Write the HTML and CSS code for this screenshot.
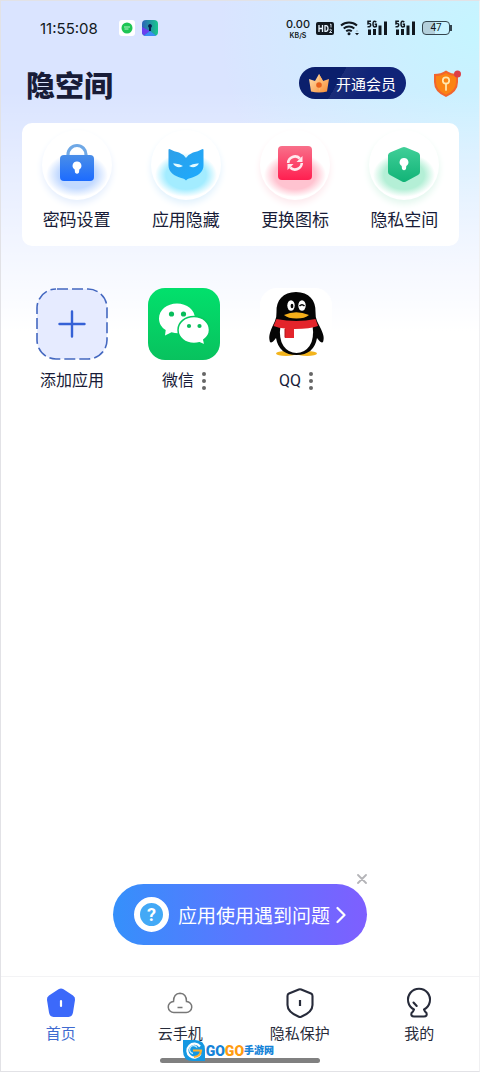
FILE: index.html
```
<!DOCTYPE html>
<html lang="zh-CN">
<head>
    <meta charset="UTF-8">
    <meta name="viewport" content="width=device-width, initial-scale=1.0">
    <title>隐空间</title>
    <link rel="stylesheet" href="styles.css">
</head>
<body>
    <div class="page">
        <div class="status-bar">
            <span class="clock">11:55:08</span>
            <svg class="status-app" width="16" height="16" viewBox="0 0 16 16">
                <rect width="16" height="16" rx="3" fill="#fff"/>
                <circle cx="8" cy="8" r="5.500" fill="#1ec554"/>
                <path d="M5 7h6M5.500 9h4" stroke="#b6f5c8" stroke-width="1"/>
            </svg>
            <svg class="status-app" width="16" height="16" viewBox="0 0 16 16">
                <defs>
                    <linearGradient id="spaceFill" x1="0" y1="0" x2="1" y2="0">
                        <stop offset="0" stop-color="#2c62b8"/>
                        <stop offset="1" stop-color="#18c88c"/>
                    </linearGradient>
                </defs>
                <rect width="16" height="16" rx="4" fill="url(#spaceFill)"/>
                <path d="M0 7v5a4 4 0 0 0 2 3.500L8 11z" fill="#6a3ff0"/>
                <path d="M2 15.500 8 11l6 4.500A4 4 0 0 1 12 16H4a4 4 0 0 1-2-.5z" fill="#3c8cf4"/>
                <path d="M8 4a2 2 0 0 0-1 3.700V11h2V7.700A2 2 0 0 0 8 4z" fill="#08204f"/>
            </svg>
            <div class="status-right">
                <div class="speed"><b>0.00</b><span>KB/S</span></div>
                <svg width="18" height="13" viewBox="0 0 18 13">
                    <rect width="18" height="13" rx="2" fill="#111820"/>
                    <path d="M3 3v7M6.500 3v7M3 6.500h3.500M9 3.700v5.600h1q2 0 2-2.800t-2-2.800z" fill="none" stroke="#e8f4ff" stroke-width="1.300"/>
                    <path d="M14 2.500l1-.5v3.500M13.500 7.800q1.500-1 2 0 0 1-2 2.700h2.500" fill="none" stroke="#e8f4ff" stroke-width=".9"/>
                </svg>
                <svg width="20" height="16" viewBox="0 0 20 16">
                    <g fill="none" stroke="#111820" stroke-width="2">
                        <path d="M1 5.500a12 12 0 0 1 16 0"/>
                        <path d="M3.700 8.500a8 8 0 0 1 10.600 0"/>
                        <path d="M6.200 11.300a4.500 4.500 0 0 1 5.600 0"/>
                    </g>
                    <circle cx="9" cy="13.700" r="1.500" fill="#111820"/>
                    <path d="M15 13h4l-2 2.300z" fill="#111820"/>
                    <path d="M15.500 11.500 17 10l1.500 1.500z" fill="#9db4bd"/>
                </svg>
                <svg width="22" height="16" viewBox="0 0 22 16">
                    <path d="M5 1.200H2v2.500q2.700-.8 2.700 1.300T1.500 6.800M10.300 2Q7 0 7 4t3.300 2.500V4.300H8.700" fill="none" stroke="#111820" stroke-width="1.500"/>
                    <path d="M2 9.500h3V15H2zM7 9h3v6H7zM12.500 5.500h3V15h-3zM18 1.500h3V15h-3z" fill="#111820"/>
                </svg>
                <svg width="22" height="16" viewBox="0 0 22 16">
                    <path d="M5 1.200H2v2.500q2.700-.8 2.700 1.300T1.500 6.800M10.300 2Q7 0 7 4t3.300 2.500V4.300H8.700" fill="none" stroke="#111820" stroke-width="1.500"/>
                    <path d="M2 9.500h3V15H2zM7 9h3v6H7zM12.500 5.500h3V15h-3zM18 1.500h3V15h-3z" fill="#111820"/>
                </svg>
                <div class="battery">47</div>
            </div>
        </div>

        <header class="header">
            <h1>隐空间</h1>
            <button class="vip" type="button">
                <svg width="20" height="19" viewBox="0 0 20 19">
                    <defs>
                        <linearGradient id="crownFill" x1="0" y1="0" x2="1" y2="1">
                            <stop offset="0" stop-color="#ffe2b4"/>
                            <stop offset="1" stop-color="#f98d33"/>
                        </linearGradient>
                    </defs>
                    <path d="M10 0 14 7 20 5 18 17.500Q10 19.500 2 17.500L0 5 6 7z" fill="url(#crownFill)"/>
                    <path d="M10 0 14 7 10 18z" fill="#ffb86e"/>
                    <circle cx="10" cy="11" r="2.800" fill="#e8601c"/>
                </svg>
                开通会员
            </button>
            <button class="guard" type="button" aria-label="安全">
                <svg width="28" height="28" viewBox="0 0 28 28">
                    <path d="M13 1.500Q18 5 25 5v8q0 10-12 15Q1 23 1 13V5q7 0 12-3.500z" fill="#f2652d"/>
                    <path d="M13 4Q17 7 23 7v6q0 8.500-10 12.700Q3 21.500 3 13V7q6 0 10-3z" fill="#fb8413"/>
                    <circle cx="13" cy="11.500" r="3.200" fill="none" stroke="#ffe9b0" stroke-width="1.700"/>
                    <path d="M13 14.500V21" stroke="#ffe9b0" stroke-width="1.700" stroke-linecap="round"/>
                    <circle cx="24.500" cy="5" r="3.500" fill="#dc4048"/>
                </svg>
            </button>
        </header>

        <main class="main">
            <section class="tools">
                <button class="tool" type="button">
                    <span class="disc blue">
                        <svg width="70" height="70" viewBox="0 0 70 70">
                            <defs>
                                <linearGradient id="lockFill" x1="0" y1="0" x2="0" y2="1">
                                    <stop offset="0" stop-color="#4a8ee8"/>
                                    <stop offset="1" stop-color="#1c6bff"/>
                                </linearGradient>
                            </defs>
                            <path d="M26 27v-2.500a9 9 0 0 1 18 0V27" fill="none" stroke="#6fa8e6" stroke-width="3.200"/>
                            <rect x="18" y="25" width="34" height="26" rx="4" fill="url(#lockFill)"/>
                            <path d="M35 31.500a4.300 4.300 0 0 0-2.300 8l.3 3q2 2.500 4 0l.3-3a4.300 4.300 0 0 0-2.300-8z" fill="#fff"/>
                        </svg>
                    </span>
                    密码设置
                </button>
                <button class="tool" type="button">
                    <span class="disc cyan">
                        <svg width="70" height="70" viewBox="0 0 70 70">
                            <defs>
                                <linearGradient id="maskFill" x1="0" y1="0" x2="1" y2="1">
                                    <stop offset="0" stop-color="#2e9fe8"/>
                                    <stop offset="1" stop-color="#1cabff"/>
                                </linearGradient>
                            </defs>
                            <path d="M17.500 20q0-1.500 1.500-.7Q23 21.500 28 22.500q4 1.500 7 5.500 3-4 7-5.500 5-1 9-3.200 1.500-.8 1.500.7V35c0 6-4 10-10.500 12.300-3 1-5.500 1.200-7 3.200-1.500-2-4-2.200-7-3.200C21.500 45 17.500 41 17.500 35z" fill="url(#maskFill)"/>
                            <path d="M22 33.500q6-.5 10 2.500-6 3.500-10-2.500zM48 33.500q-6-.5-10 2.500 6 3.500 10-2.500z" fill="#e4faff"/>
                        </svg>
                    </span>
                    应用隐藏
                </button>
                <button class="tool" type="button">
                    <span class="disc red">
                        <svg width="70" height="70" viewBox="0 0 70 70">
                            <defs>
                                <linearGradient id="swapFill" x1="0" y1="0" x2="0" y2="1">
                                    <stop offset="0" stop-color="#f8708a"/>
                                    <stop offset="1" stop-color="#ff1f50"/>
                                </linearGradient>
                            </defs>
                            <rect x="18" y="16" width="34" height="34" rx="4" fill="url(#swapFill)"/>
                            <path d="M28.200 33a6.800 6.800 0 0 1 11.600-4.500M41.800 33a6.800 6.800 0 0 1-11.600 4.500" fill="none" stroke="#ffe9ee" stroke-width="2.600"/>
                            <path d="M42.500 26v6h-6zM27.500 40v-6h6z" fill="#ffe9ee"/>
                        </svg>
                    </span>
                    更换图标
                </button>
                <button class="tool" type="button">
                    <span class="disc green">
                        <svg width="70" height="70" viewBox="0 0 70 70">
                            <defs>
                                <linearGradient id="hexFill" x1="0" y1="0" x2="0" y2="1">
                                    <stop offset="0" stop-color="#40cf98"/>
                                    <stop offset="1" stop-color="#12b377"/>
                                </linearGradient>
                            </defs>
                            <path d="M33 17.500q2-1 4 0l12 5q2 1 2 3V42q0 2-2 3l-12 6.500q-2 1-4 0L21 45q-2-1-2-3V25.500q0-2 2-3z" fill="url(#hexFill)"/>
                            <path d="M35 28a4.300 4.300 0 0 0-2.300 8l.3 3q2 2.500 4 0l.3-3a4.300 4.300 0 0 0-2.300-8z" fill="#fff"/>
                        </svg>
                    </span>
                    隐私空间
                </button>
            </section>

            <section class="apps">
                <div class="app">
                    <button class="app-icon" type="button" aria-labelledby="add-label">
                        <svg width="72" height="72" viewBox="0 0 72 72">
                            <rect x="1" y="1" width="70" height="70" rx="19" fill="#e6ebff" stroke="#4468c0" stroke-width="1.600" stroke-dasharray="11 4" stroke-dashoffset="-1"/>
                            <path d="M36 23.500v25M23.500 36h25" stroke="#3561d6" stroke-width="2.400" stroke-linecap="round"/>
                        </svg>
                    </button>
                    <div class="app-name" id="add-label">添加应用</div>
                </div>
                <div class="app">
                    <button class="app-icon" type="button" aria-labelledby="wechat-label">
                        <svg width="72" height="72" viewBox="0 0 72 72">
                            <defs>
                                <linearGradient id="wechatFill" x1="0" y1="0" x2="0" y2="1">
                                    <stop offset="0" stop-color="#02e06c"/>
                                    <stop offset="1" stop-color="#08c25e"/>
                                </linearGradient>
                            </defs>
                            <rect width="72" height="72" rx="17" fill="url(#wechatFill)"/>
                            <path d="M29 15.500c-10 0-18 6.500-18 15 0 5 2.600 9 6.700 11.600L17 47.500l6.500-3.300q8 2.300 14-.6 9-4 9.500-13c0-8.600-8-15.100-18-15.100z" fill="#fff"/>
                            <path d="M46 28.500c-9 0-16 6-16 13.500s7 13.500 16 13.500q3 0 5.500-.8L57 57.200l-1.200-5.300q5.700-4 5.700-9.900c0-7.500-6.500-13.500-15.500-13.500z" fill="#fff" stroke="#06c960" stroke-width="1.500"/>
                            <g fill="#08bd5b">
                                <circle cx="23.500" cy="26" r="2.600"/>
                                <circle cx="35.500" cy="26" r="2.600"/>
                                <circle cx="41" cy="38" r="2.100"/>
                                <circle cx="51.500" cy="38" r="2.100"/>
                            </g>
                        </svg>
                    </button>
                    <div class="app-name">
                        <span id="wechat-label">微信</span>
                        <button class="more" type="button" aria-label="更多"><i></i><i></i><i></i></button>
                    </div>
                </div>
                <div class="app">
                    <button class="app-icon" type="button" aria-labelledby="qq-label">
                        <svg width="72" height="72" viewBox="0 0 72 72">
                            <rect width="72" height="72" rx="17" fill="#fff"/>
                            <ellipse cx="26" cy="65.500" rx="10" ry="2.600" fill="#f3b41c"/>
                            <ellipse cx="47" cy="65.500" rx="10" ry="2.600" fill="#f3b41c"/>
                            <path d="M36 4C23 4 16 12.500 16.500 24q.2 5-1.500 9C11 41 8.500 47 9.500 52q.5 6 6.500-2 3 17 20.500 17T57 50q6 8 6.500 2C64.500 47 61 41 57 33q-1.700-4-1.500-9C56 12.500 49 4 36 4z" fill="#050505"/>
                            <path d="M20.500 37q-2 14 3 21 5 7 13 7t13-7q5-7 3-21z" fill="#fff"/>
                            <path d="M16.500 31q20 4 39 0l2.500 7q-8 3-23 3h-1v9h-9v-9.500q-6-.5-11.500-2.500z" fill="#e3242b"/>
                            <path d="M25 41v8.500" stroke="#ad171c" stroke-width="1"/>
                            <ellipse cx="31" cy="17.500" rx="3.700" ry="5.200" fill="#fff"/>
                            <ellipse cx="42" cy="17.500" rx="3.700" ry="5.200" fill="#fff"/>
                            <ellipse cx="32" cy="18" rx="1.400" ry="2.200" fill="#050505"/>
                            <path d="M39.500 18q2.500-2.500 5 0" fill="none" stroke="#050505" stroke-width="1.500"/>
                            <path d="M24 27Q36 21.500 49 27 45 30.500 36.500 30.500T24 27z" fill="#f5b01a"/>
                        </svg>
                    </button>
                    <div class="app-name">
                        <span id="qq-label">QQ</span>
                        <button class="more" type="button" aria-label="更多"><i></i><i></i><i></i></button>
                    </div>
                </div>
            </section>
        </main>

        <div class="help">
            <button class="help-close" type="button" aria-label="关闭">
                <svg width="10" height="10" viewBox="0 0 10 10">
                    <path d="M1 1l8 8M9 1 1 9" stroke="#b4b4b8" stroke-width="1.800" stroke-linecap="round"/>
                </svg>
            </button>
            <button class="help-btn" type="button">
                <span class="help-mark">?</span>
                <span class="help-text">应用使用遇到问题</span>
                <svg width="10" height="18" viewBox="0 0 10 18">
                    <path d="M1.500 2 8.500 9 1.500 16" fill="none" stroke="#fff" stroke-width="2.200" stroke-linecap="round" stroke-linejoin="round"/>
                </svg>
            </button>
        </div>

        <nav class="tabs">
            <a class="tab active" href="#home">
                <svg width="32" height="32" viewBox="0 0 32 32">
                    <path d="M13.500 2.300q2.500-1.600 5 0L28 8.500q2.500 1.700 2 4.500l-2 12.500q-.6 4-4.500 4.500h-15q-3.900-.5-4.500-4.500L2 13q-.5-2.800 2-4.500z" fill="#3c69fa"/>
                    <path d="M16 14v5" stroke="#fff" stroke-width="2.200" stroke-linecap="round"/>
                </svg>
                首页
            </a>
            <a class="tab" href="#cloud">
                <svg width="32" height="32" viewBox="0 0 32 32">
                    <path d="M10 25.500a5.500 5.500 0 0 1-.5-11Q9.500 6.500 16 6.200q6.500.3 6.500 8.300a5.500 5.500 0 0 1-.5 11z" fill="none" stroke="#777" stroke-width="1.500"/>
                    <path d="M13.500 20.500h5" stroke="#777" stroke-width="1.500"/>
                </svg>
                云手机
            </a>
            <a class="tab" href="#privacy">
                <svg width="32" height="32" viewBox="0 0 32 32">
                    <path d="M14.800 2.500q1.200-.5 2.400 0l9.800 4q1.500.7 1.500 2.500v9c0 6-4.500 9-11.300 11.700q-1.200.5-2.400 0C8 27 3.500 24 3.500 18V9q0-1.800 1.500-2.500z" fill="none" stroke="#272b3a" stroke-width="2.100"/>
                    <path d="M16 13v6" stroke="#272b3a" stroke-width="2.200"/>
                </svg>
                隐私保护
            </a>
            <a class="tab" href="#mine">
                <svg width="32" height="32" viewBox="0 0 32 32">
                    <path d="M11 22.500a11 11 0 1 1 10 0q.5 1.800 2.500 3.500 1 3.500-2.500 3.500H11Q7.500 29.500 8.500 26q2-1.700 2.500-3.500z" fill="none" stroke="#272b3a" stroke-width="2.100" stroke-linejoin="round"/>
                    <path d="M10.500 15.500l3.200 3.500" stroke="#272b3a" stroke-width="2.100" stroke-linecap="round"/>
                </svg>
                我的
            </a>
            <div class="home-bar"></div>
            <div class="watermark">
                <svg width="22" height="21" viewBox="0 0 22 21">
                    <path d="M0 0h12q10 0 10 10v11H10Q0 21 0 11z" fill="#1598e2"/>
                    <path d="M17 6.500A7 7 0 1 0 17.500 14" fill="none" stroke="#fff" stroke-width="2.200"/>
                    <path d="M10 10.500h8q-.5 6-7 6.500" fill="none" stroke="#ffb02e" stroke-width="2.200"/>
                    <path d="M14 7.500a4 4 0 1 0-4 6" fill="none" stroke="#c9efff" stroke-width="1.300"/>
                </svg>
                <span class="mark-blue">GO</span><span class="mark-orange">GO</span><span class="mark-cn">手游网</span>
            </div>
        </nav>
    </div>
</body>
</html>
```

FILE: styles.css
```
* {
    box-sizing: border-box;
}
body {
    margin: 0;
    font-family: Roboto, "Noto Sans CJK SC", sans-serif;
    color: #181c38;
    background: #fff;
}
h1 {
    margin: 0;
}
button {
    padding: 0;
    border: none;
    background: none;
    font-family: inherit;
    color: inherit;
    cursor: pointer;
}
svg {
    display: block;
    flex: none;
}
.page {
    display: flex;
    flex-direction: column;
    min-height: 100vh;
    border: 1px solid #e2e2e6;
    border-right-color: #f0f0f2;
    background:
        linear-gradient(to bottom, rgba(255, 255, 255, 0) 90px, rgba(255, 255, 255, 0.6) 230px, #fff 330px),
        radial-gradient(ellipse 260px 240px at 100% 30px, #c5f5ff, rgba(197, 245, 255, 0)),
        #dae4ff;
}

/* status bar */
.status-bar {
    display: flex;
    align-items: center;
    height: 54px;
    padding: 0 29px 0 39px;
    color: #111820;
}
.clock {
    margin-right: 21px;
    font-family: Inter, sans-serif;
    font-size: 15px;
}
.status-app {
    margin-right: 7px;
}
.status-right {
    display: flex;
    align-items: center;
    gap: 6px;
    margin-left: auto;
}
.speed {
    display: flex;
    flex-direction: column;
    align-items: center;
    font-family: Inter, sans-serif;
    font-size: 7px;
    font-weight: 600;
    line-height: 9px;
}
.speed b {
    font-size: 11px;
    font-weight: 500;
    line-height: 14px;
}
.battery {
    position: relative;
    width: 28px;
    height: 14px;
    border: 1px solid #34454e;
    border-radius: 4px;
    background: linear-gradient(to right, #b4d0dc 47%, transparent 47%);
    font-size: 10px;
    line-height: 12px;
    text-align: center;
}
.battery::after {
    content: "";
    position: absolute;
    top: 3px;
    right: -3px;
    width: 2px;
    height: 6px;
    background: #34454e;
}

/* title row */
.header {
    display: flex;
    align-items: center;
    height: 56px;
    padding: 0 18px 0 25px;
}
.header h1 {
    margin-right: auto;
    padding-top: 8px;
    font-size: 29px;
    font-weight: 900;
    line-height: 40px;
}
.vip {
    display: flex;
    align-items: center;
    gap: 7px;
    height: 32px;
    padding: 0 10px;
    border-radius: 16px;
    background: linear-gradient(120deg, #0b1f6c 38%, #1b2d78 38%, #102478 60%);
    color: #fff;
    font-size: 15px;
}
.guard {
    margin-left: 27px;
}

/* tool card */
.main {
    flex: 1;
    padding: 12px 20px 0 21px;
}
.tools {
    display: grid;
    grid-template-columns: repeat(4, 1fr);
    padding: 7px 0 14px;
    border-radius: 10px;
    background: #fff;
}
.tool {
    display: flex;
    flex-direction: column;
    align-items: center;
    gap: 8px;
    font-size: 17px;
    line-height: 24px;
}
.disc {
    width: 70px;
    height: 70px;
    border-radius: 50%;
}
.blue {
    background: radial-gradient(ellipse 31px 22px at 50% 45px, #c3daff 60%, rgba(195, 218, 255, 0));
    box-shadow: 0 4px 7px #e6effd;
}
.cyan {
    background: radial-gradient(ellipse 31px 22px at 50% 45px, #a3ecff 65%, rgba(163, 236, 255, 0));
    box-shadow: 0 4px 7px #e2f2fd;
}
.red {
    background: radial-gradient(ellipse 31px 22px at 50% 45px, #ffc3d0 65%, rgba(255, 195, 208, 0));
    box-shadow: 0 4px 7px #fdeaee;
}
.green {
    background: radial-gradient(ellipse 31px 22px at 50% 45px, #b4efd6 65%, rgba(180, 239, 214, 0));
    box-shadow: 0 4px 7px #e3f7ee;
}

/* app grid */
.apps {
    display: grid;
    grid-template-columns: repeat(auto-fill, 112px);
    margin: 42px -6px 0;
}
.app {
    display: flex;
    flex-direction: column;
    align-items: center;
    gap: 9px;
}
.app-name {
    display: flex;
    align-items: center;
    gap: 8px;
    font-size: 16px;
    line-height: 24px;
}
.more {
    display: flex;
    flex-direction: column;
    gap: 3px;
}
.more i {
    width: 4px;
    height: 4px;
    border-radius: 50%;
    background: #666;
}

/* help bubble */
.help {
    position: relative;
    align-self: center;
    margin-bottom: 31px;
}
.help-btn {
    display: flex;
    align-items: center;
    height: 61px;
    padding: 0 21px;
    border-radius: 31px;
    background: linear-gradient(to right, #3590fb, #5b76ff 50%, #7e5fff);
    color: #fff;
}
.help-mark {
    width: 35px;
    height: 35px;
    border: 6px solid #fff;
    border-radius: 50%;
    background: #43a9f6;
    font-size: 18px;
    font-weight: 700;
    line-height: 23px;
}
.help-text {
    margin: 0 6px 0 9px;
    font-size: 19px;
}
.help-close {
    position: absolute;
    top: -10px;
    right: 0;
}

/* bottom tabs */
.tabs {
    position: relative;
    display: grid;
    grid-template-columns: repeat(4, 1fr);
    height: 95px;
    padding-top: 10px;
    border-top: 1px solid #f3f3f5;
    background: #fff;
}
.tab {
    display: flex;
    flex-direction: column;
    align-items: center;
    gap: 5px;
    color: #272b3a;
    font-size: 15px;
    line-height: 20px;
    text-decoration: none;
}
.active {
    color: #3f6bd0;
}
.home-bar {
    position: absolute;
    bottom: 8px;
    left: 50%;
    width: 160px;
    height: 5px;
    margin-left: -80px;
    border-radius: 3px;
    background: #808080;
}
.watermark {
    position: absolute;
    bottom: 10px;
    left: 38%;
    display: flex;
    align-items: center;
    font-size: 14px;
    font-weight: 900;
    line-height: 20px;
}
.watermark svg {
    margin-right: 1px;
}
.mark-blue {
    color: #1583d8;
}
.mark-orange {
    color: #ff9c10;
}
.mark-cn {
    color: #1583d8;
    font-size: 10px;
}
```
